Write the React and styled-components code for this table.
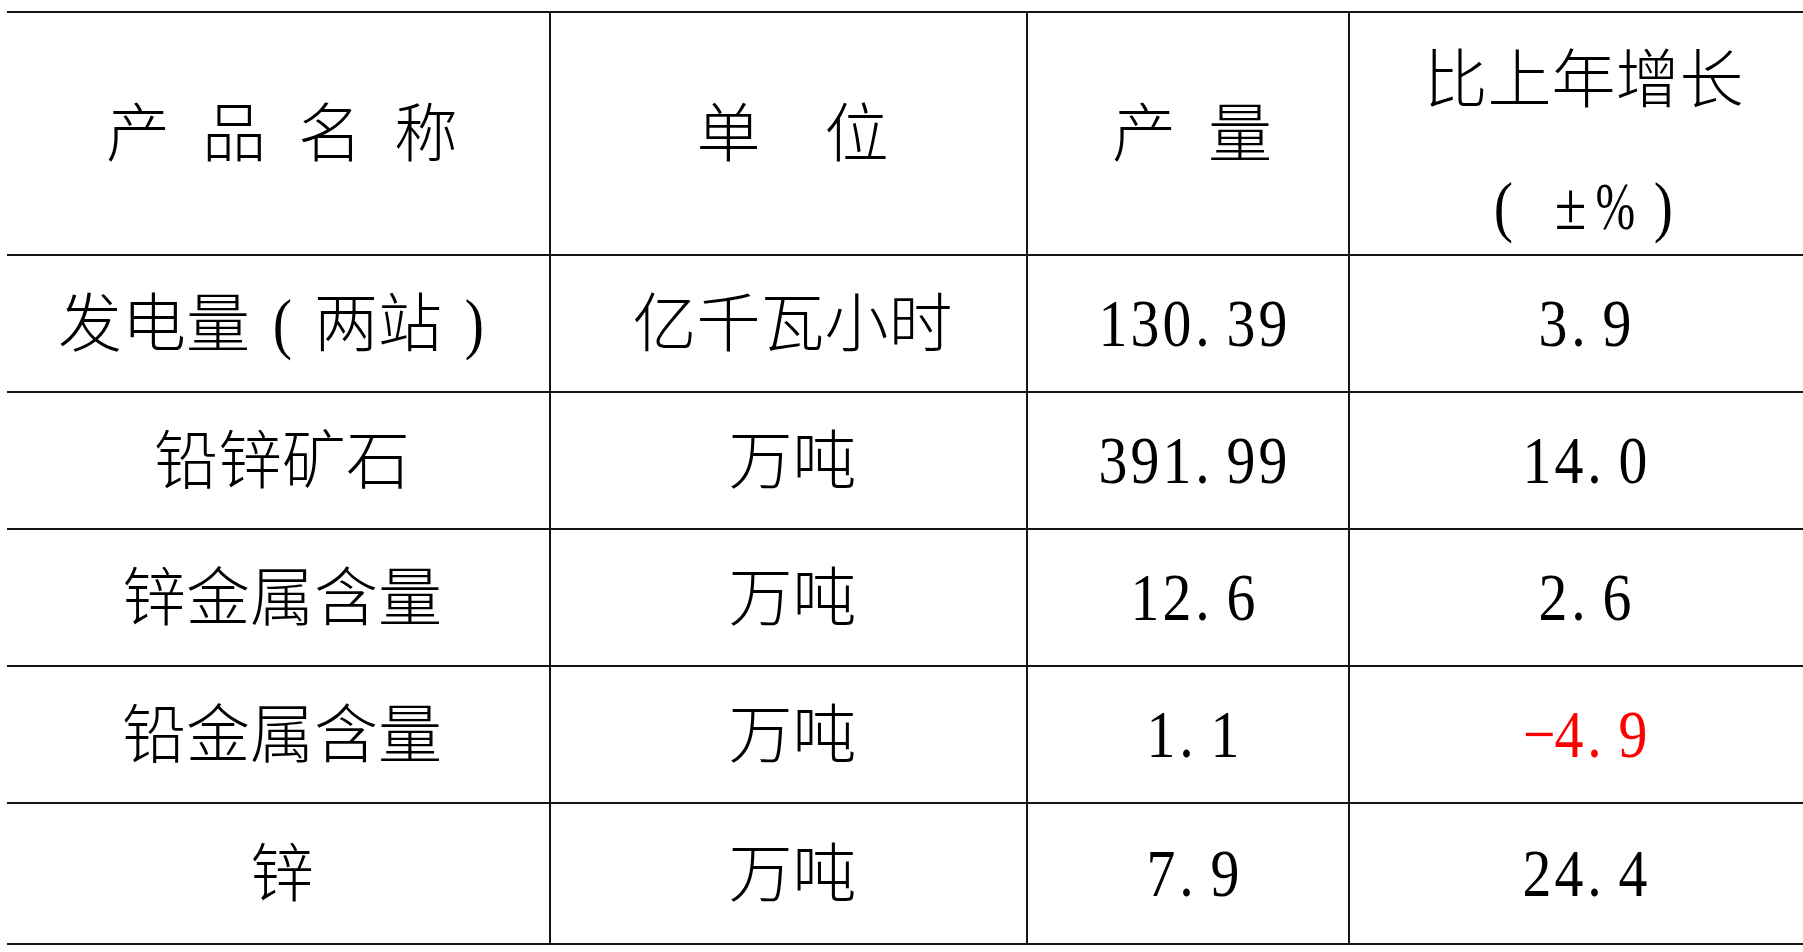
import React from 'react'
import styled, {createGlobalStyle} from 'styled-components'

const GlobalStyle = createGlobalStyle`
    html, body {
        margin: 0;
        padding: 0;
        background: #ffffff;
        overflow: hidden;
    }
`

const rows = [
    {name: '发电量（两站）', unit: '亿千瓦小时', output: '130.39', growth: '3.9'},
    {name: '铅锌矿石', unit: '万吨', output: '391.99', growth: '14.0'},
    {name: '锌金属含量', unit: '万吨', output: '12.6', growth: '2.6'},
    {name: '铅金属含量', unit: '万吨', output: '1.1', growth: '−4.9', down: true},
    {name: '锌', unit: '万吨', output: '7.9', growth: '24.4'},
]

// full-width signs that still take the narrow serif glyph, centred in a wide box
const wideLatin = {'％': '%', '（': '(', '）': ')'}

const isLatin = (ch) => ch.charCodeAt(0) < 128 || ch === '±' || ch === '−' || wideLatin[ch]

// each character sits in its own box, half or full width, as in the printed table
const Chars = ({text}) => (
    <Line>
        {Array.from(text).map((ch, i) => {
            const latin = isLatin(ch)
            const wide = !latin || Boolean(wideLatin[ch])
            return (
                <Glyph key={i} $wide={wide} $dot={ch === '.'}>
                    {latin ? <Latin $narrow={ch === '％'}>{wideLatin[ch] || ch}</Latin> : ch}
                </Glyph>
            )
        })}
    </Line>
)

const App = () => {
    return (
        <>
            <GlobalStyle />
            <Page>
                <Table>
                    <colgroup>
                        <col style={{width: 543}} />
                        <col style={{width: 477}} />
                        <col style={{width: 322}} />
                        <col style={{width: 461}} />
                    </colgroup>
                    <thead>
                        <HeadRow>
                            <Cell><Chars text="产 品 名 称" /></Cell>
                            <Cell><Chars text="单  位" /></Cell>
                            <Cell><Chars text="产 量" /></Cell>
                            <Cell>
                                <HeadStack>
                                    <Chars text="比上年增长" />
                                    <Chars text="( ±％)" />
                                </HeadStack>
                            </Cell>
                        </HeadRow>
                    </thead>
                    <tbody>
                        {rows.map((r) => (
                            <Row key={r.name}>
                                <Cell><Chars text={r.name} /></Cell>
                                <Cell><Chars text={r.unit} /></Cell>
                                <Cell><Chars text={r.output} /></Cell>
                                <Cell $red={r.down}><Chars text={r.growth} /></Cell>
                            </Row>
                        ))}
                    </tbody>
                </Table>
            </Page>
        </>
    )
}

export default App

const Page = styled.div`
    width: 1803px;
    height: 952px;
    padding: 11px 0 0 7px;
    box-sizing: border-box;
    overflow: hidden;
`

const Table = styled.table`
    border-collapse: collapse;
    table-layout: fixed;
    width: 1803px;
    font-family: "Noto Sans CJK SC", sans-serif;
    font-weight: 300;
    font-size: 64px;
    color: #000;
`

const HeadRow = styled.tr`
    height: 243px;
`

const Row = styled.tr`
    height: 137px;

    &:last-child {
        height: 141px;
    }
`

const Cell = styled.td`
    border: 2px solid #151515;
    padding: 0 0 12px 8px;
    text-align: center;
    vertical-align: middle;
    color: ${({$red}) => ($red ? '#ff0000' : '#000')};

    &:first-child {
        border-left: none;
    }
`

const HeadStack = styled.div`
    display: flex;
    flex-direction: column;
    align-items: center;
    gap: 63px;
    padding-top: 20px;
`

const Line = styled.div`
    display: flex;
    justify-content: center;
    align-items: center;
    height: 64px;
    line-height: 64px;
    white-space: pre;
`

const Glyph = styled.span`
    display: inline-block;
    width: ${({$wide}) => ($wide ? '64px' : '32px')};
    height: 64px;
    text-align: ${({$dot}) => ($dot ? 'left' : 'center')};
    padding-left: ${({$dot}) => ($dot ? '2px' : '0')};
    box-sizing: border-box;
    overflow: visible;
`

const Latin = styled.span`
    display: inline-block;
    font-family: "Liberation Serif", serif;
    font-weight: 400;
    font-size: 68px;
    line-height: 64px;
    transform: scaleX(${({$narrow}) => ($narrow ? 0.7 : 0.85)});
    transform-origin: center;
`
